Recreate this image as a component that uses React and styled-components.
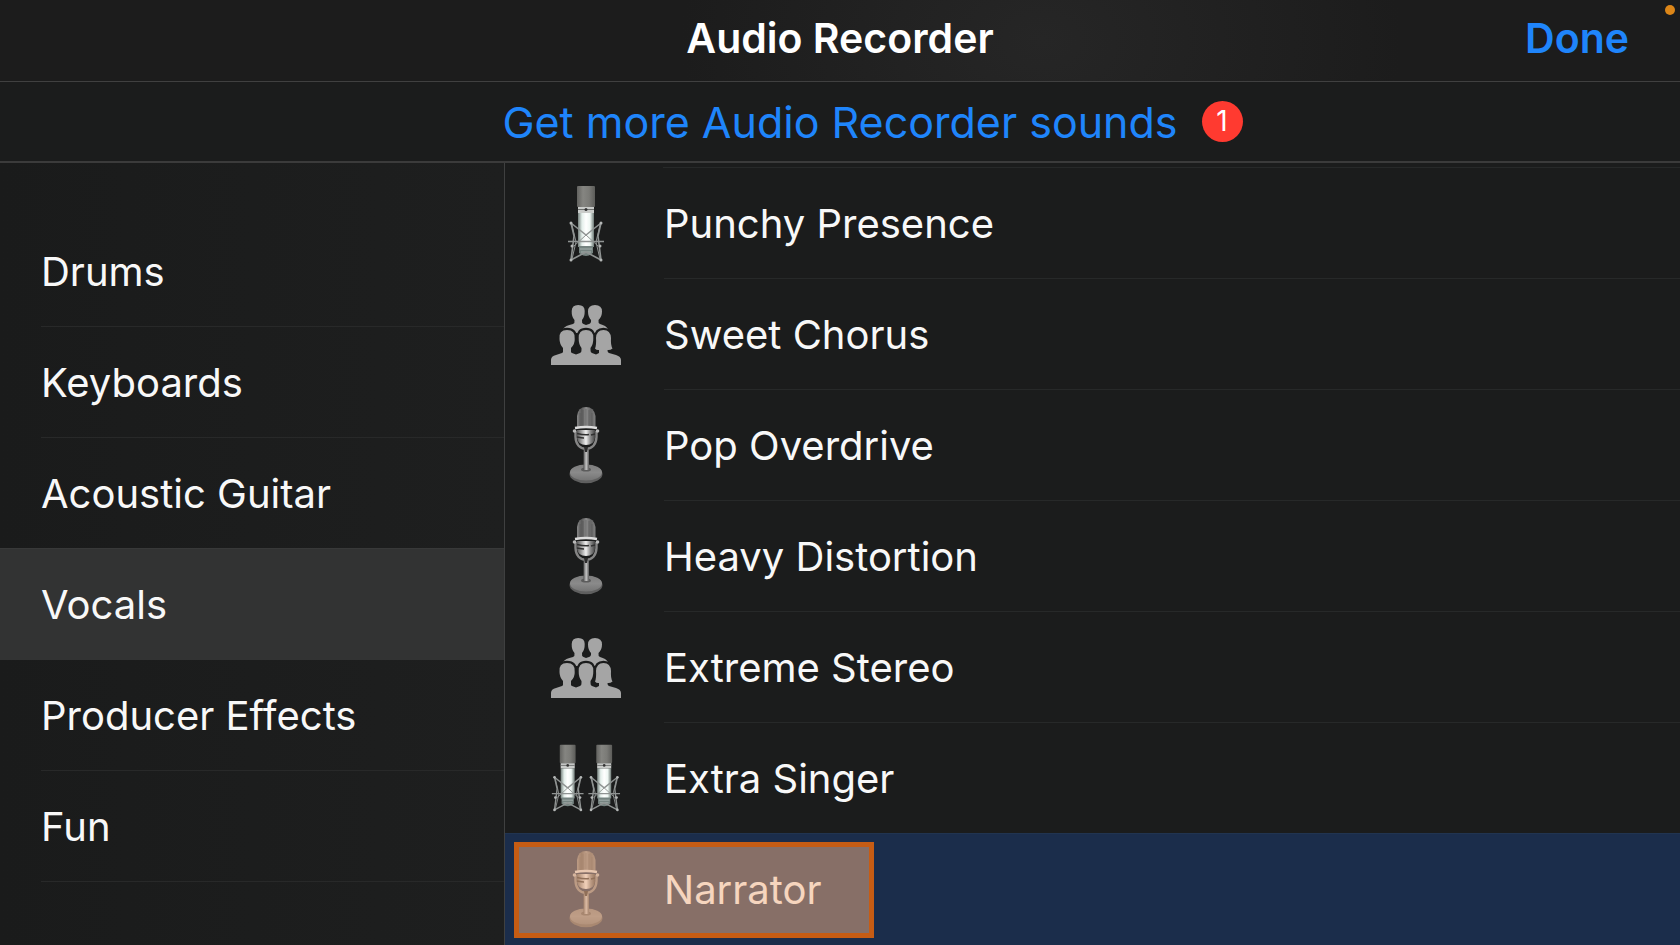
import React from "react";
import styled, { createGlobalStyle, css } from "styled-components";

const GlobalStyle = createGlobalStyle`
  *, *::before, *::after { box-sizing: border-box; }
  body {
    margin: 0;
    background: #1b1c1c;
    color: #f8f8f8;
    font-family: Inter, "Liberation Sans", sans-serif;
  }
  button { font: inherit; color: inherit; background: none; border: 0; padding: 0; cursor: pointer; }
  ul { list-style: none; margin: 0; padding: 0; }
`;

const Screen = styled.div`
  position: relative;
  display: grid;
  grid-template-rows: auto auto minmax(0, 1fr);
  height: 100vh;
  overflow: hidden;
`;

const Header = styled.header`
  display: grid;
  grid-template-columns: 1fr auto 1fr;
  align-items: center;
  height: 82px;
  padding: 0 51px 5px;
  border-bottom: 1px solid #404040;
  background: radial-gradient(ellipse 360px 260px at 62% 50%, #262626, #1c1c1c);
`;

const Title = styled.h1`
  grid-column: 2;
  margin: 0;
  font-size: 41px;
  line-height: 48px;
  font-weight: 600;
  color: #fff;
`;

const DoneButton = styled.button`
  justify-self: end;
  font-size: 41px;
  line-height: 48px;
  font-weight: 600;
  color: #1f85fb;
`;

const RecordingDot = styled.span`
  position: absolute;
  top: 5px;
  right: 5px;
  width: 10px;
  height: 10px;
  border-radius: 50%;
  background: #dc8618;
`;

const Banner = styled.div`
  display: grid;
  grid-template-columns: 1fr auto 1fr;
  align-items: center;
  height: 81px;
  border-bottom: 2px solid #3b3b3b;
`;

const BannerLink = styled.a`
  grid-column: 2;
  font-size: 43px;
  line-height: 52px;
  color: #1f85fb;
  text-decoration: none;
`;

const Badge = styled.span`
  display: grid;
  place-items: center;
  width: 41px;
  height: 41px;
  margin-left: 24px;
  border-radius: 50%;
  background: #ff3a30;
  color: #fff;
  font-size: 28px;
  line-height: 41px;
`;

const Body = styled.div`
  display: grid;
  grid-template-columns: 30% minmax(0, 1fr);
  min-height: 0;
`;

const pane = css`
  min-height: 0;
  overflow-y: auto;
  scrollbar-width: none;
`;

const Sidebar = styled.nav`
  ${pane}
  padding-top: 53px;
  background: linear-gradient(90deg, #1a1b1b, #1e1f1f);
`;

const SoundPane = styled.main`
  ${pane}
  padding-top: 4px;
  border-left: 1px solid #3f4040;
`;

const SoundList = styled.ul`
  border-top: 1px solid transparent;
  border-image: linear-gradient(90deg, transparent 159px, #272929 159px) 1;
`;

const rowText = css`
  position: relative;
  display: flex;
  align-items: center;
  width: 100%;
  height: 111px;
  font-size: 40px;
  line-height: 52px;
  text-align: left;
  white-space: nowrap;
`;

const CategoryButton = styled.button`
  ${rowText}
  padding-left: 41px;
  background: ${(p) =>
    p.$active
      ? "#323333"
      : "linear-gradient(#282929, #282929) 41px 100% / 100% 1px no-repeat"};
  box-shadow: ${(p) => (p.$active ? "0 -1px 0 #383939" : "none")};
`;

const SoundButton = styled.button`
  ${rowText}
  padding-left: 41px;
  background: ${(p) =>
    p.$active
      ? "#1b2d4b"
      : "linear-gradient(#272929, #272929) 159px 100% / 100% 1px no-repeat"};
  box-shadow: ${(p) => (p.$active ? "0 -1px 0 #213450" : "none")};
`;

const Icon = styled.svg`
  flex: none;
  width: 80px;
  height: 80px;
  margin-right: 38px;
`;

const Highlight = styled.span`
  position: absolute;
  inset: 8px auto 7px 9px;
  width: 360px;
  border: 5px solid #c65c14;
  background: rgba(244, 177, 131, 0.5);
`;

function CondenserMic() {
  return (
    <g>
      <rect x="31" y="2" width="18" height="21" rx="1" fill="url(#grille)" />
      <rect x="32" y="23" width="16" height="6" fill="#c9cbc9" />
      <path d="M32 25.5h16" stroke="#6d706e" />
      <circle cx="40" cy="25.500" r="1.500" fill="#333" />
      <rect x="32" y="29" width="16" height="34" fill="url(#chrome)" />
      <path d="M33 62h14v7q-7 6-14 0z" fill="#758380" />
      <path d="M34 65h12M35 68h10" stroke="#a5b0ad" />
      <g fill="none" stroke="#8f9392" strokeWidth="1.600" strokeLinejoin="round">
        <path d="M25 39 L40 51 L55 39 L52 52 L55 76 L40 68 L25 76 L28 52 Z" />
        <path d="M26 41 L30 58 L26 75 M54 41 L50 58 L54 75" strokeWidth="1" />
        <path d="M28 62 L40 51 L52 62" strokeWidth="1" />
        <path d="M22 57.500 H58" />
      </g>
      <g fill="#b4b7b6">
        <circle cx="25" cy="39" r="1.500" />
        <circle cx="55" cy="39" r="1.500" />
        <circle cx="26" cy="62" r="1.500" />
        <circle cx="54" cy="62" r="1.500" />
        <circle cx="25" cy="76" r="1.500" />
        <circle cx="55" cy="76" r="1.500" />
      </g>
    </g>
  );
}

function StudioMic() {
  return (
    <g>
      <ellipse cx="40" cy="68" rx="16.500" ry="9.200" fill="#5f5f5f" />
      <ellipse cx="40" cy="66.500" rx="16" ry="8" fill="url(#base)" />
      <ellipse cx="40" cy="63.500" rx="5" ry="2" fill="#5c5c5c" />
      <rect x="37.500" y="44" width="5.500" height="20" fill="url(#stem)" />
      <path d="M29.500 25 V31 Q30 42 40 43 Q50 42 50.500 31 V25" fill="none" stroke="#858585" strokeWidth="2.400" />
      <path d="M31 24h18v8q-1 7-9 7t-9-7z" fill="url(#shine)" />
      <path d="M31 27.500q8 2 12 1M31 31q5 1 7 1M49 28l-4 1" stroke="#303030" strokeWidth="1.500" fill="none" />
      <path d="M31 22V10Q32 1 40 1T49.500 10V22Z" fill="url(#capsule)" />
      <path d="M34 7v14M37 4v17M40 3v18M43 4v17M46 7v14" stroke="#4a4a4a" strokeWidth="0.800" opacity="0.500" />
      <path d="M29 22Q40 20 51 22" fill="none" stroke="#dcdcdc" strokeWidth="2.400" />
      <circle cx="28.500" cy="25" r="1.800" fill="#b9b9b9" />
      <circle cx="51.500" cy="25" r="1.800" fill="#b9b9b9" />
      <path d="M38 41h4l-1 5h-2z" fill="#2c2c2c" />
    </g>
  );
}

const frontHeads = [
  "M13.500 44Q12.500 35 21 35Q29.500 35 28.700 44Q29 49 25 53V59H17V53Q13.500 49 13.500 44Z",
  "M32.700 43Q32.500 35 40 35Q47.500 35 47.300 43Q47.500 49 44.500 53V59H35.500V53Q32.500 49 32.700 43Z",
  "M50 43Q50.500 35 57.500 35Q64.500 35 65 43Q64.500 50 66.500 53.500Q64 55.500 61.500 55V59H53V55Q50.500 55.500 49 53.500Q50.500 50 50 43Z",
];

function Choir() {
  return (
    <g fill="#a5a5a5">
      <path d="M17 34Q19 30.500 27 29Q29 28 28.500 25Q25.500 22 25.700 16Q25.700 10 32.200 10Q38.800 10 38.700 16Q38.800 22 36 25Q35.500 28 37.500 29L40 30L43 29Q45.500 28 45 25Q42 22 42 16.500Q42 10 49 10Q56 10 56 16.500Q56 22 52.500 25Q52 28 54 29Q60 30.500 62 34V38H17Z" />
      <g fill="none" stroke="#1b1c1c" strokeWidth="4.500" strokeLinejoin="round">
        {frontHeads.map((d) => <path key={d} d={d} />)}
      </g>
      {frontHeads.map((d) => <path key={d} d={d} />)}
      <path d="M5 70V65Q5 61 10 60L16 58Q18 57 18 55H24Q24 57 26 58L30 59.500L34 58Q36 57 36 55H44Q44 57 46 58L50 59.500L53 58Q55 57 55 55H61Q61 57 63 58L70 60Q75 61.500 75 65V70Z" />
    </g>
  );
}

function SoundIcon({ kind }) {
  return (
    <Icon viewBox="0 0 80 80" aria-hidden="true">
      {kind === "condenser" && <CondenserMic />}
      {kind === "studio" && <StudioMic />}
      {kind === "choir" && <Choir />}
      {kind === "pair" && (
        <>
          <g transform="translate(-13.500 4) scale(0.880)"><CondenserMic /></g>
          <g transform="translate(23 4) scale(0.880)"><CondenserMic /></g>
        </>
      )}
    </Icon>
  );
}

const GradientDefs = styled.svg`
  position: absolute;
  width: 0;
  height: 0;
`;

function Gradient({ id, stops, vertical }) {
  return (
    <linearGradient id={id} x1="0" y1="0" x2={vertical ? 0 : 1} y2={vertical ? 1 : 0}>
      {stops.map((color, i) => (
        <stop key={i} offset={i / (stops.length - 1)} stopColor={color} />
      ))}
    </linearGradient>
  );
}

const categories = ["Drums", "Keyboards", "Acoustic Guitar", "Vocals", "Producer Effects", "Fun"];

const sounds = [
  { name: "Punchy Presence", kind: "condenser" },
  { name: "Sweet Chorus", kind: "choir" },
  { name: "Pop Overdrive", kind: "studio" },
  { name: "Heavy Distortion", kind: "studio" },
  { name: "Extreme Stereo", kind: "choir" },
  { name: "Extra Singer", kind: "pair" },
  { name: "Narrator", kind: "studio" },
];

export default function App() {
  return (
    <Screen>
      <GlobalStyle />
      <GradientDefs aria-hidden="true">
        <defs>
          <Gradient id="grille" stops={["#62625f", "#858581", "#7b7b77", "#5c5c59"]} />
          <Gradient id="chrome" stops={["#76827e", "#e4efeb", "#ffffff", "#eef7f3", "#6d7975"]} />
          <Gradient id="capsule" stops={["#858585", "#5b5b5b", "#8c8c8c", "#666666", "#7d7d7d"]} />
          <Gradient id="shine" stops={["#565656", "#a0a0a0", "#f0f0f0", "#8a8a8a", "#444444"]} />
          <Gradient id="stem" stops={["#555555", "#c4c4c4", "#5a5a5a"]} />
          <Gradient id="base" vertical stops={["#7d7d7d", "#8a8a8a", "#747474"]} />
        </defs>
      </GradientDefs>
      <Header>
        <Title>Audio Recorder</Title>
        <DoneButton type="button">Done</DoneButton>
      </Header>
      <RecordingDot />
      <Banner>
        <BannerLink href="#sounds">Get more Audio Recorder sounds</BannerLink>
        <Badge>1</Badge>
      </Banner>
      <Body>
        <Sidebar aria-label="Categories">
          <ul>
            {categories.map((name) => (
              <li key={name}>
                <CategoryButton type="button" $active={name === "Vocals"}>{name}</CategoryButton>
              </li>
            ))}
          </ul>
        </Sidebar>
        <SoundPane id="sounds">
          <SoundList>
            {sounds.map(({ name, kind }) => (
              <li key={name}>
                <SoundButton type="button" $active={name === "Narrator"}>
                  <SoundIcon kind={kind} />
                  {name}
                  {name === "Narrator" && <Highlight />}
                </SoundButton>
              </li>
            ))}
          </SoundList>
        </SoundPane>
      </Body>
    </Screen>
  );
}
